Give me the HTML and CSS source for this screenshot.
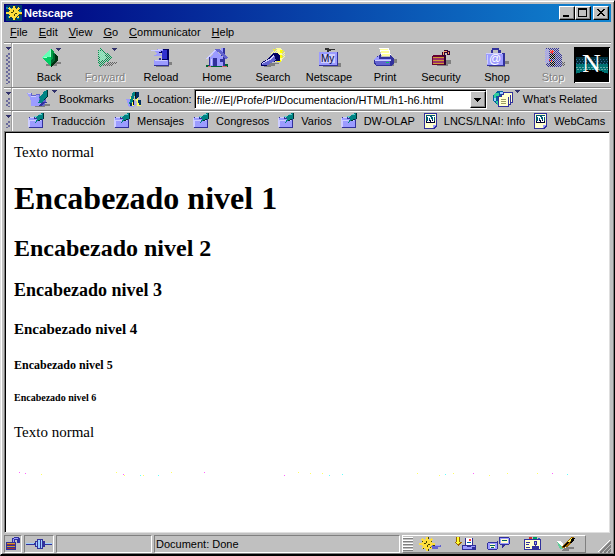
FILE: index.html
```html
<!DOCTYPE html>
<html lang="es">
<head>
<meta charset="utf-8">
<title>Netscape</title>
<link rel="stylesheet" href="styles.css">
</head>
<body>
<svg class="defs" aria-hidden="true">
  <defs>
    <pattern id="dots" width="2" height="2" patternUnits="userSpaceOnUse"><path fill="#c0c0c0" d="M0 0h1v1H0zM1 1h1v1H1z"/></pattern>
    <symbol id="helm" viewBox="0 0 16 14">
      <path fill="#ffde3c" stroke="none" d="M7 0h2v14H7zM0 6h16v2H0z"/>
      <path fill="none" stroke="#ffde3c" stroke-width="2" d="M3 2l10 10M13 2L3 12"/>
      <circle cx="8" cy="7" r="4" fill="none" stroke="#ffde3c" stroke-width="2"/>
      <path fill="#424200" d="M7 4h1v2H7zM5 6h2v1H5zM9 7h2v1H9zM8 8h1v2H8zM9 0h1v2H9zM14 8h2v1h-2zM9 12h1v2H9zM4 11h1v1H4zM12 4h1v1h-1zM3 4h1v1H3zM11 10h1v1h-1z"/>
    </symbol>
    <symbol id="folder" viewBox="0 0 17 16">
      <path fill="#31319c" d="M1 4h6v1h8v10H1z"/>
      <path fill="#9c9cff" d="M1 5h5v1h8v8H1z"/>
      <path fill="#ceceff" d="M0 5h1v9H0zM2 4h4v1H2zM1 7h12v1H1zM1 8h1v6H1z"/>
      <path fill="#008484" d="M6 3h3l5-3h2v6h-2l-3 2H9l-1 2H7l2-4z"/>
      <path fill="#63cece" d="M6 3h3v1H6zM11 1h3v1h-3z"/>
      <path fill="#003131" d="M15 0h1v6h-1zM12 6h2v1h-2zM10 7h2v1h-2z"/>
    </symbol>
    <symbol id="page" viewBox="0 0 14 16">
      <path fill="#31319c" d="M0 0h13v13l-3 3H0z"/>
      <path fill="#ffffce" d="M1 1h11v11l-3 3H1z"/>
      <path fill="#005a73" d="M2 2h9v8H2z"/>
      <path fill="#000031" d="M2 8h3V7h4v1h2v2H2z"/>
      <path stroke="#fff" fill="none" stroke-width="1" d="M4.500 9V3.500h1l2.500 5h1V3M3 3.500h2M8 3.500h3M3 8.500h3"/>
      <path fill="#9c9cff" d="M9 12h3l-3 3z"/>
    </symbol>
    <symbol id="lock" viewBox="0 0 20 18">
      <path fill="#808080" d="M14 11h5v4h-3v2H5v-2h9z"/>
      <path fill="#660033" d="M0 7h1V6h13v10H0z"/>
      <path fill="#ce9c31" d="M1 8h11v1H1zM1 11h11v1H1zM1 14h11v1H1z"/>
      <path fill="#9c3163" d="M1 9h11v2H1zM1 12h11v2H1z"/>
      <path fill="#310031" d="M12 6h2v10h-2zM10 3h2V1h4v1h2v4h-3V4h-2v3h-3z"/>
      <path fill="#ff9c63" d="M11 3h1v3h-1zM12 2h3v1h-3zM16 3h1v2h-1z"/>
    </symbol>
    <symbol id="tri" viewBox="0 0 5 3"><path fill="#31316b" d="M0 0h5v1H4v1H3v1H2V2H1V1H0z"/></symbol>
  </defs>
</svg>

<div class="window">
  <header class="titlebar">
    <svg class="app-icon" viewBox="0 0 16 16"><path fill="#003c6b" d="M0 0h16v16H0z"/><path fill="#0084b5" d="M0 2h2v2H0zM5 3h2v1H5zM13 5h2v2h-2zM2 11h2v2H2zM11 12h2v2h-2z"/><use href="#helm" width="16" height="14" y="1"/></svg>
    <h1 class="window-title">Netscape</h1>
    <div class="window-buttons">
      <button class="raised" aria-label="Minimize"><svg viewBox="0 0 12 10"><path d="M2 7h6v2H2z"/></svg></button>
      <button class="raised" aria-label="Maximize"><svg viewBox="0 0 12 10"><path fill-rule="evenodd" d="M1 0h9v9H1zM2 2v6h7V2z"/></svg></button>
      <button class="raised close" aria-label="Close"><svg viewBox="0 0 12 10"><path d="M2 1h2v1h1v1h2V2h1V1h2v1H9v1H8v1H7v1h1v1h1v1h1v1H8V7H7V6H5v1H4v1H2V7h1V6h1V5h1V4H4V3H3V2H2z"/></svg></button>
    </div>
  </header>

  <nav class="menubar">
    <button><u>F</u>ile</button>
    <button><u>E</u>dit</button>
    <button><u>V</u>iew</button>
    <button><u>G</u>o</button>
    <button><u>C</u>ommunicator</button>
    <button><u>H</u>elp</button>
  </nav>

  <div class="bar">
    <button class="handle" aria-label="Collapse navigation toolbar"><svg viewBox="0 0 5 3"><use href="#tri"/></svg><span></span></button>
    <div class="tools">
      <button><svg viewBox="0 0 32 20"><path fill="#808080" d="M20 14h8v2h-4v2H13v-2h7z"/><path fill="#63ffb5" d="M9 10l9-10v9l-5 2z"/><path fill="#00ce63" d="M9 10l9-1v10z"/><path fill="#009c42" d="M18 0l6 8v4l-6 7z"/><path fill="#006331" d="M20 5l3 2v6l-5 6v-7l2-2z"/><path fill="#003110" d="M22 5l3 4v3l-6 7h-1v-2l4-5z"/><path fill="#9cffce" d="M17 2h1v7h-1zM11 9h3v1h-3z"/><use href="#tri" x="23" width="5" height="3"/></svg>Back</button>
      <button disabled><svg viewBox="0 0 32 20"><path fill="#636363" d="M18 14h10v2h-4v2H13v-2h5z"/><path fill="#009c52" d="M9 2h2V0h1l12 10-13 9-2-5z"/><path fill="#63ffb5" d="M10 2l6 3 1 5-6 4z"/><path fill="url(#dots)" d="M6 0h23v20H6z"/><use href="#tri" x="23" width="5" height="3"/></svg>Forward</button>
      <button><svg viewBox="0 0 32 20"><path fill="#808080" d="M24 14h3v3h-3v2H11v-1h13z"/><path fill="#000063" d="M13 1h11v13h-7V5h-3z"/><path fill="#3131ce" d="M17 2h5v9h-5z"/><path fill="#9c9cff" d="M6 2h4l3-1h5v2l-4 1 3 4H8l4-2-3-3H6z"/><path fill="#ceceff" d="M6 2h5l3-1h3v1l-4 1H6z"/><path fill="#31319c" d="M9 12h3l2-2h2v2h8v6H9z"/><path fill="#9c9cff" d="M9 12h3l2-2v2h9v5H9z"/><path fill="#ceceff" d="M10 12h12v1H10z"/></svg>Reload</button>
      <button><svg viewBox="0 0 32 20"><path fill="#006331" d="M5 17h3v-2h4v2h12v-1h3v3H5z"/><path fill="#ce6363" d="M7 18h3v1H7zM21 18h5v1h-5z"/><path fill="#31319c" d="M8 9h16v9H8zM20 0h4v8h-4z"/><path fill="#9c9cff" d="M9 10l6-8 7 8v8H9zM20 0h2v6h-2z"/><path fill="#6363ce" d="M14 1h4l9 9-2 1-8-7-2-1z"/><path fill="#ceceff" d="M13 2h2l-8 9H5zM10 11h1v6h-1z"/><path fill="#31319c" d="M12 10h4v8h-4zM19 11h3v3h-3z"/></svg>Home</button>
      <button><svg viewBox="0 0 32 20"><circle cx="21" cy="7" r="7" fill="#ffff9c"/><path fill="#ffff00" d="M16 1h3v2h-3zM23 2h4v3h-4zM22 7h4v3h-4zM20 12h4v2h-4z"/><path fill="url(#dots)" d="M14 0h6v15h-6zM25 0h4v15h-4z"/><path fill="#808080" d="M12 15h10v1h-4v2h-4v1H7v-1z"/><path fill="#000063" d="M4 18v-3l8-5 4-5h4l3 3v5h-3l-4 1-7 4z"/><path fill="#6363ce" d="M5 15l8-4 4-4 2 5-8 5H5z"/><path fill="#ceceff" d="M5 15l7-4 4-4h1v2l-4 3-8 4z"/></svg>Search</button>
      <button><svg viewBox="0 0 32 20"><path fill="#808080" d="M25 15h3v4H10v-1h15z"/><path fill="#313131" d="M12 0h4v1h2v2h-2v1h-2V2h-2zM18 1h4v1h-4z"/><path fill="#31319c" d="M6 4h19v14H6z"/><path fill="#9c9cff" d="M6 4h18v13H6z"/><path fill="#ceceff" d="M8 6h14v9H8z"/><text class="tile-text" x="8" y="14">My</text></svg>Netscape</button>
      <button><svg viewBox="0 0 32 20"><path fill="#808080" d="M25 11h3v4h-3v3H10v-2h14z"/><path fill="#fff" d="M10 0h10l2 8h-9z"/><path fill="#ffff9c" d="M11 1h8v1h-8zM12 3h8v2h-8zM13 6h8v2h-8z"/><path fill="#31319c" d="M5 11l7-5v3h9V7l4 4v4l-2 3H7l-2-2z"/><path fill="#9c9cff" d="M5 11l5-3v3h12v2H6z"/><path fill="#6363ce" d="M6 13h15v4H7z"/><path fill="#ceceff" d="M6 12h16v1H6z"/><path fill="#00ce63" d="M17 14h3v1h-3z"/></svg>Print</button>
      <button><svg viewBox="0 0 32 20"><use href="#lock" x="7" y="1" width="20" height="18"/></svg>Security</button>
      <button><svg viewBox="0 0 32 20"><path fill="#808080" d="M24 13h4v3h-4v3H8v-1h15z"/><path fill="#31319c" d="M5 5h5V2h1V0h7v2h2v3h4v13H6z"/><path fill="#c0c0c0" d="M12 2h5v3h-5z"/><path fill="#9c9cff" d="M5 6h17v11H6z"/><path fill="#ceceff" d="M5 5h16v1H5zM6 7h1v9H6z"/><text class="tile-text at" x="8" y="15">@</text></svg>Shop</button>
      <button disabled><svg viewBox="0 0 32 20"><path fill="#636363" d="M22 14h6v4H12v-2h10z"/><path fill="#31319c" d="M8 0h14v5l3 2v10l-2 2H10l-2-5z"/><path fill="#9c9cff" d="M8 1h4v14H8z"/><path fill="#000" d="M13 6h5v5h-5zM13 13h5v5h-5z"/><path fill="url(#dots)" d="M6 0h23v20H6z"/><path fill="#ff3131" d="M13 2h1v1h-1zM15 2h1v1h-1zM14 3h3v1h-3zM13 4h3v1h-3zM15 5h1v1h-1zM12 11h1v2h-1zM14 12h1v2h-1z"/></svg>Stop</button>
    </div>
    <svg class="throbber" viewBox="0 0 36 36" role="img" aria-label="Netscape"><path fill="#000" d="M0 0h36v36H0z"/><path fill="#00313c" d="M2 10h32v17H2z"/><path fill="#007373" d="M2 17h32v9H2z"/><path stroke="#31639c" stroke-dasharray="1 2" d="M2 12.500h32M3 14.500h31M2 16.500h32"/><path stroke="#63a5a5" stroke-dasharray="2 1" d="M2 20.500h32M3 22.500h31"/><path d="M2 27l5-2 5-2h12l5 2 5 2v7H2z"/><text x="8" y="25">N</text><path fill="none" stroke="#fff" d="M.5 35.500h35V.5"/></svg>
  </div>

  <div class="bar location">
    <button class="handle" aria-label="Collapse location toolbar"><svg viewBox="0 0 5 3"><use href="#tri"/></svg><span></span></button>
    <button class="bookmarks"><svg class="wide-icon" viewBox="0 0 30 18"><path fill="#808080" d="M17 14h6v2h-5v1H8v-2z"/><path fill="#6363ce" d="M1 3h4v2h4V4h4v5h6v3l-2 4H4v-4L3 8 1 5z"/><path fill="#9c9cff" d="M0 3h4v3h5V5h3v6l4 1-5 4H4v-4L3 8z"/><path fill="#ceceff" d="M0 3h4v1H1zM4 6h5v1H4z"/><path fill="#008484" d="M12 7l4-3-1-1 5-3v7l-3 3-3 3h-3l2-4z"/><path fill="#003131" d="M20 0h1v7h-1l-3 3v-1l3-3z"/><path fill="#31319c" d="M11 16l4-4h5v1h-3l-2 3z"/><use href="#tri" x="25" width="5" height="3"/></svg>Bookmarks</button>
    <label for="url"><svg class="drag-icon" viewBox="0 0 16 18"><path fill="#9c9cff" d="M0 9h4l3-3 3 9-3 2H3z"/><path fill="#ffff63" d="M4 7h4v9H6zM10 6h2v5h3v5h-4z"/><path fill="#008484" d="M7 2h3l-4 12H3z"/><path fill="#003163" d="M10 2h3v4l-2 3H9zM4 13h2v3H4zM12 10h3v5h-2z"/><path fill="#111" d="M9 2h1v6H9zM7 10h1v5H7z"/></svg>Location:</label>
    <div class="combo">
      <input id="url" type="text" value="file:///E|/Profe/PI/Documentacion/HTML/h1-h6.html">
      <button class="raised" aria-label="Show history"><svg viewBox="0 0 7 4"><path d="M0 0h7v1H6v1H5v1H4v1H3V3H2V2H1V1H0z"/></svg></button>
    </div>
    <button class="related"><svg class="wide-icon" viewBox="0 0 28 18"><circle cx="8" cy="8" r="7" fill="#00639c"/><path fill="#31ce9c" d="M3 3h4v3H4v3H2V5zM4 11h3v4H5z"/><path fill="#9cceff" d="M8 2h3v2H8zM2 8h2v3H2z"/><path fill="#31319c" d="M11 2h10v11h-2v2h-2v2H6V6h3V4h2z"/><path fill="#ffffce" d="M12 3h8v9h-1V5h-7zM10 5h8v9h-1V7h-7zM7 7h9v9H7z"/><path fill="#9c9c63" d="M9 9h5v1H9zM9 11h5v1H9zM9 13h5v1H9z"/><use href="#tri" x="23" width="5" height="3"/></svg>What's Related</button>
  </div>

  <div class="bar personal">
    <button class="handle" aria-label="Collapse personal toolbar"><svg viewBox="0 0 5 3"><use href="#tri"/></svg><span></span></button>
    <nav class="links">
      <button><svg class="folder"><use href="#folder"/></svg>Traducción</button>
      <button><svg class="folder"><use href="#folder"/></svg>Mensajes</button>
      <button><svg class="folder"><use href="#folder"/></svg>Congresos</button>
      <button><svg class="folder"><use href="#folder"/></svg>Varios</button>
      <button><svg class="folder"><use href="#folder"/></svg>DW-OLAP</button>
      <a href="#"><svg class="page-icon"><use href="#page"/></svg>LNCS/LNAI: Info</a>
      <a href="#"><svg class="page-icon"><use href="#page"/></svg>WebCams</a>
    </nav>
  </div>

  <main class="document">
    <p>Texto normal</p>
    <h1>Encabezado nivel 1</h1>
    <h2>Encabezado nivel 2</h2>
    <h3>Encabezado nivel 3</h3>
    <h4>Encabezado nivel 4</h4>
    <h5>Encabezado nivel 5</h5>
    <h6>Encabezado nivel 6</h6>
    <p>Texto normal</p>
    <svg class="specks" viewBox="14 467 595 12" preserveAspectRatio="xMinYMin meet"><path fill="#ff63ff" d="M19 472h1v1h-1zM25 473h1v1h-1zM123 474h1v1h-1zM204 472h1v1h-1zM284 475h1v1h-1zM473 473h1v1h-1zM552 473h1v1h-1z"/><path fill="#ffff63" d="M41 474h1v1h-1zM116 472h1v1h-1zM124 475h1v1h-1zM143 475h1v1h-1zM171 472h1v1h-1zM298 472h1v1h-1zM310 473h1v1h-1zM322 473h1v1h-1zM417 473h1v1h-1zM439 475h1v1h-1zM453 473h1v1h-1zM489 475h1v1h-1zM507 473h1v1h-1zM537 473h1v1h-1z"/><path fill="#63ffff" d="M140 475h1v1h-1zM158 475h1v1h-1zM329 475h1v1h-1zM342 474h1v1h-1zM445 474h1v1h-1zM567 474h1v1h-1z"/></svg>
  </main>

  <footer class="statusbar">
    <button class="sunken lock" aria-label="Security"><svg viewBox="0 0 16 14"><path fill="#31319c" d="M1 5h10v8H1zM7 1h2V0h5v1h1v5h-3V3h-2v3H7z"/><path fill="#ce9c31" d="M2 6h8v1H2zM2 9h8v1H2z"/><path fill="#9c3131" d="M2 7h8v1H2zM2 11h8v1H2z"/><path fill="#9c9cff" d="M8 2h1v3H8zM9 1h4v1H9z"/></svg></button>
    <div class="sunken plug"><svg viewBox="0 0 26 12"><path fill="#31319c" d="M0 5h9V3h2V1h3v10h-3V9H9V7H0zM14 1h3v2h2v2h7v2h-7v2h-2v2h-3z"/><path fill="#9cceff" d="M0 5h8v1H0zM10 4h1v4h-1zM12 2h2v8h-2zM15 2h1v8h-1zM19 5h7v1h-7z"/></svg></div>
    <div class="sunken progress"></div>
    <div class="sunken message" role="status">Document: Done</div>
    <div class="components">
      <span class="grip"></span>
      <button aria-label="Navigator"><svg viewBox="0 0 24 14"><path fill="#6363ce" d="M12 8h10v2h-3v2h-8z"/><path fill="#9c9cff" d="M14 8h7v1h-7z"/><use href="#helm" width="16" height="14"/></svg></button>
      <button aria-label="Inbox"><svg viewBox="0 0 24 14"><path fill="#9c6300" d="M3 0h4v5h2L5 9 1 5h2z"/><path fill="#ffff31" d="M4 0h2v5h1L5 8 3 5h1z"/><path fill="#31319c" d="M9 8h3V1h8v7h3v5H9z"/><path fill="#fff" d="M13 1h6v7h-6z"/><path fill="#ff3131" d="M16 2h2v2h-2z"/><path fill="#00639c" d="M14 5h4v1h-4z"/><path fill="#9c9cff" d="M10 9h4v1h4V9h4v1h-3v2h-9z"/></svg></button>
      <button aria-label="Discussions"><svg viewBox="0 0 24 14"><path fill="#31319c" d="M0 6h1V5h8l2-2v9h-1v1H1v-1H0zM12 0h10v1h1v6h-1v1h-4l-3 3V8h-2V7h-1z"/><path fill="#9c9cff" d="M1 6h9v6H1zM13 1h9v6h-9z"/><path fill="#ffffce" d="M3 7h5v4H3zM14 2h7v4h-7z"/><path fill="#006363" d="M3 8h5v1H3zM4 10h3v1H4zM15 3h5v1h-5z"/></svg></button>
      <button aria-label="Address Book"><svg viewBox="0 0 24 14"><path fill="#31319c" d="M3 2h17v11H3z"/><path fill="#ffffce" d="M4 3h15v9H4z"/><path fill="#ce3131" d="M8 0h3v2H8z"/><path fill="#009c63" d="M12 0h4v2h-4z"/><path fill="#3163ce" d="M17 1h2v1h-2z"/><path fill="#31319c" d="M5 5h4v1H5zM5 7h3v1H5zM5 10h4v1H5zM13 4h3v4h-1v1h3v3h-7V9h3V8h-1z"/><path fill="#9c9cff" d="M14 5h1v2h-1z"/></svg></button>
      <button aria-label="Composer"><svg viewBox="0 0 24 14"><path fill="#808080" d="M10 10h9v2h-5v2H7z"/><path fill="#63ce9c" d="M2 5h5l3 5-3 2H5z"/><path fill="#fff" d="M2 4h4l5 7h-3z"/><path fill="#9c6300" d="M7 9l9-9h3v3l-7 7-5 1z"/><path fill="#ffff63" d="M9 8l7-7h2l-8 8z"/><path fill="#000" d="M17 1h3l-2 4-3 1zM13 5h2l-6 5H7z"/></svg></button>
    </div>
    <svg class="resize" viewBox="0 0 13 13"><path stroke="#fff" d="M0 12L12 0M4 12l8-8M8 12l4-4"/><path stroke="#808080" stroke-width="2" d="M2 13L13 2M6 13l7-7M10 13l3-3"/></svg>
  </footer>
</div>
</body>
</html>
```
FILE: styles.css
```css
* { box-sizing: border-box; }

body {
  margin: 0;
  background: #c0c0c0;
  color: #000;
  font: 11px/14px "Liberation Sans", Arial, sans-serif;
}

button {
  padding: 0;
  border: 0;
  background: none;
  color: inherit;
  font: inherit;
  white-space: nowrap;
}

a { color: inherit; text-decoration: none; }

svg { display: block; flex: none; shape-rendering: crispEdges; }

.defs { position: absolute; width: 0; height: 0; }

.window {
  display: flex;
  flex-direction: column;
  min-height: 100vh;
  padding: 3px 3px 1px;
  border: 1px solid;
  border-color: #dfdfdf #000 #000 #dfdfdf;
  border-bottom-width: 2px;
  box-shadow: inset 1px 1px #fff, inset -1px -1px #808080;
}

.raised {
  border: 1px solid;
  border-color: #fff #000 #000 #fff;
  background: #c0c0c0;
  box-shadow: inset -1px -1px #808080;
}

.titlebar {
  display: flex;
  align-items: center;
  height: 18px;
  padding: 0 2px;
  background: linear-gradient(to right, #000080, #1084d0);
  color: #fff;
}

.app-icon { width: 16px; height: 16px; }

.window-title {
  flex: 1;
  margin: 0;
  padding-left: 2px;
  font-size: 11px;
  line-height: 14px;
}

.window-buttons { display: flex; }

.window-buttons button {
  width: 16px;
  height: 14px;
  padding: 1px;
}

.window-buttons svg { width: 12px; height: 10px; }

.window-buttons .close { margin-left: 2px; }

.menubar {
  display: flex;
  align-items: center;
  gap: 11px;
  height: 20px;
  padding: 0 6px;
}

.bar {
  display: flex;
  align-items: center;
  height: 45px;
  border-top: 1px solid #808080;
  box-shadow: inset 0 1px #fff;
}

.handle {
  display: flex;
  flex: none;
  flex-direction: column;
  align-items: center;
  align-self: stretch;
  gap: 3px;
  width: 9px;
  margin-right: 8px;
  padding: 4px 0 3px;
  border-right: 1px solid #fff;
  box-shadow: inset -1px 0 #a0a0a0;
}

.handle svg { width: 5px; height: 3px; }

.handle span {
  flex: 1;
  width: 4px;
  background: conic-gradient(#6b6b9c 25%, #c0c0c0 0 50%, #6b6b9c 0 75%, #c0c0c0 0) 0 0 / 4px 4px;
}

.tools { display: flex; flex: 1; align-self: stretch; min-width: 0; }

.tools button {
  display: flex;
  flex: none;
  flex-direction: column;
  align-items: center;
  width: 56px;
  padding-top: 5px;
}

.tools svg { width: 32px; height: 20px; margin-bottom: 2px; }

.tools button:disabled { color: #808080; text-shadow: 1px 1px #fff; }

.tile-text { fill: #000031; font-size: 10px; }
.tile-text.at { fill: #fff; font-size: 12px; }

.throbber { width: 36px; height: 36px; margin-right: 1px; }
.throbber text { fill: #fff; font: 26px "Liberation Serif", serif; }

.location { height: 23px; }

.bookmarks, .related, .location label {
  display: flex;
  align-items: center;
}

.bookmarks { gap: 2px; margin: 0 12px 0 6px; }
.bookmarks svg { width: 30px; height: 18px; }
.location label { gap: 5px; margin-right: 2px; }
.drag-icon { width: 16px; height: 18px; }

.combo {
  display: flex;
  flex: 1;
  height: 20px;
  border: 1px solid;
  border-color: #808080 #fff #fff #808080;
  background: #fff;
  box-shadow: inset 1px 1px #000;
}

.combo input {
  flex: 1;
  min-width: 0;
  padding: 1px 2px 0;
  border: 0;
  background: none;
  font: inherit;
  outline: 0;
}

.combo button {
  display: flex;
  align-items: center;
  justify-content: center;
  width: 16px;
  margin: 1px 0 0;
}

.combo button svg { width: 7px; height: 4px; }

.related { gap: 3px; margin: 0 14px 0 5px; }
.related svg { width: 28px; height: 18px; }

.personal { height: 21px; }

.links {
  display: flex;
  flex: 1;
  gap: 9px;
  min-width: 0;
  padding-left: 7px;
}

.links button, .links a {
  display: flex;
  align-items: center;
  gap: 6px;
  white-space: nowrap;
}

.folder { width: 17px; height: 16px; }
.page-icon { width: 14px; height: 16px; }

.document {
  display: flex;
  flex: 1;
  flex-direction: column;
  gap: 19px;
  padding: 11px 0 0 9px;
  margin-right: 1px;
  border: 1px solid;
  border-color: #808080 #dfdfdf #dfdfdf #808080;
  box-shadow: inset 1px 1px #000;
  background: #fff;
  font-family: "Liberation Serif", "Times New Roman", serif;
}

.document > * { margin: 0; }
.document p { font-size: 15px; line-height: 18px; }
.document h1 { font-size: 32px; line-height: 36px; }
.document h2 { font-size: 24px; line-height: 26px; }
.document h3 { font-size: 18px; line-height: 20px; }
.document h4 { font-size: 15px; line-height: 20px; }
.document h5 { font-size: 12px; line-height: 14px; }
.document h6 { font-size: 10px; line-height: 13px; }

.specks { width: 595px; max-width: 100%; height: 12px; margin-top: 7px; }

.statusbar {
  display: flex;
  align-items: stretch;
  gap: 2px;
  height: 18px;
  margin-top: 2px;
}

.sunken {
  display: flex;
  align-items: center;
  border: 1px solid;
  border-color: #808080 #fff #fff #808080;
}

.lock { width: 18px; }
.lock svg { width: 16px; height: 14px; }
.plug { width: 30px; padding-left: 1px; }
.plug svg { width: 26px; height: 12px; }
.progress { width: 96px; }
.message { flex: 1; padding-left: 1px; }

.components {
  display: flex;
  align-items: center;
  gap: 10px;
  padding-right: 6px;
  border: 1px solid;
  border-color: #fff #808080 #808080 #fff;
}

.components svg { width: 24px; height: 14px; }

.grip {
  align-self: stretch;
  width: 10px;
  margin: 1px 0;
  background: repeating-linear-gradient(#fff 0 1px, #808080 1px 2px, #c0c0c0 2px 3px);
}

.components .grip + button { margin-left: -4px; }

.resize { align-self: flex-end; width: 13px; height: 13px; margin-left: 10px; }
```
